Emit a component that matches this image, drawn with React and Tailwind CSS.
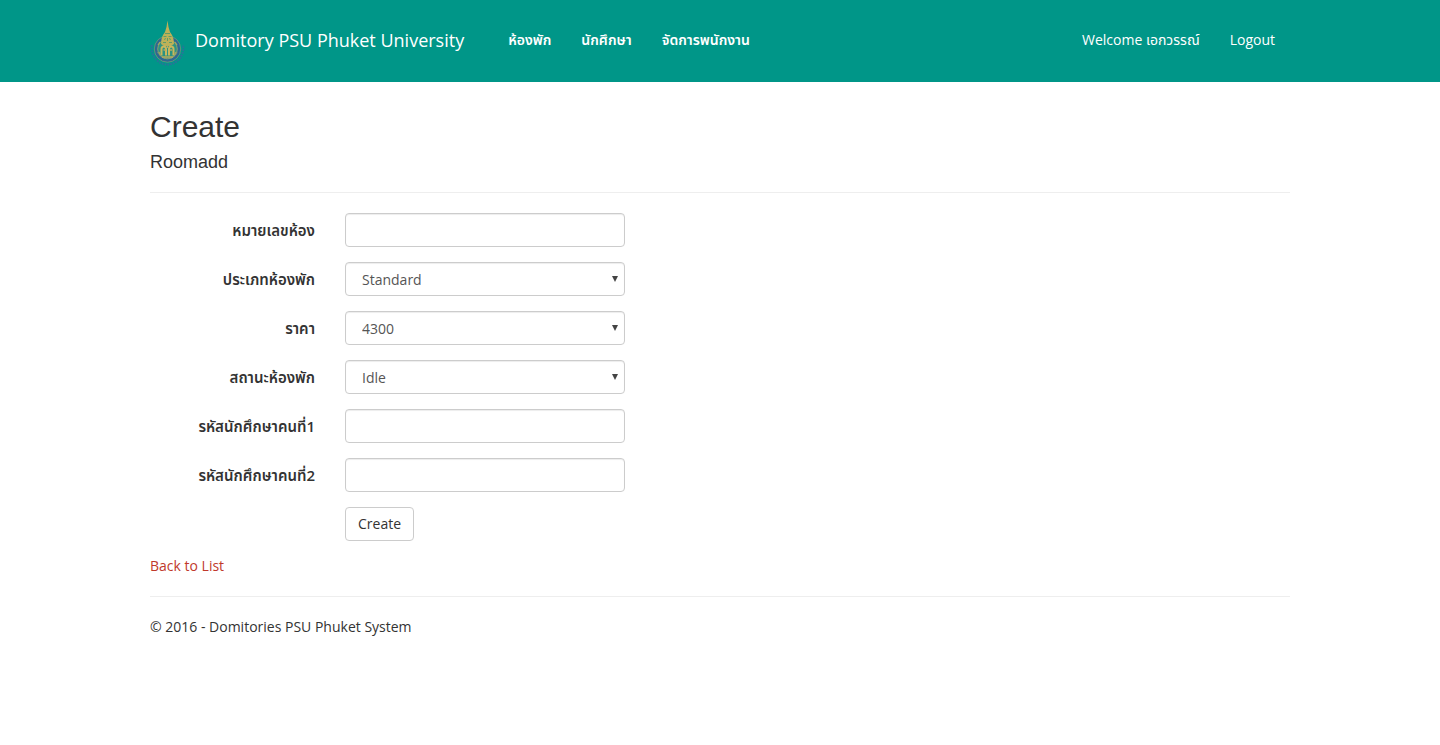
const inputClass =
  "h-[34px] w-full rounded border border-[#cccccc] bg-white px-3 text-sm text-[#555555] shadow-[inset_0_1px_1px_rgba(0,0,0,0.075)] focus:border-[#66afe9] focus:outline-none";

function Emblem() {
  return (
    <svg viewBox="0 0 36 50" className="h-[50px] w-9 shrink-0" aria-hidden="true">
      <path d="M1.8 27 C0.5 39 9 46.5 17.5 46.5 C26 46.5 34.5 39 33.2 27" fill="none" stroke="#2b719b" strokeWidth="2" strokeDasharray="1.7 1.1" />
      <circle cx="17.5" cy="31" r="11.6" fill="#2d9282" stroke="#2e6792" strokeWidth="3" />
      <circle cx="17.5" cy="31" r="13.2" fill="none" stroke="#7d9d72" strokeWidth="0.7" />
      <circle cx="17.5" cy="31" r="9.8" fill="none" stroke="#9fa566" strokeWidth="0.8" />
      <path d="M7.5 34 A10.8 10.8 0 0 0 27.5 34" fill="none" stroke="#8b9b78" strokeWidth="0.8" strokeDasharray="1 0.8" />
      <path d="M17.5 2.5 L18.5 9 L20 14 L22 17 L23.5 21 L24 26 L21 28 H14 L11 26 L11.5 21 L13 17 L15 14 L16.5 9 Z" fill="#bdb158" />
      <path d="M15 15.5 H20 M13.5 18.5 H16.5 M18.5 18.5 H21.5 M14 21.5 L16 20.5 M19 20.5 L21 21.5 M13 24.5 H16 M19 24.5 H22 M17.5 20 V23" stroke="#609c68" strokeWidth="1" />
      <path d="M11.5 37.5 V31 C11.5 27.5 16 27.5 16 31 V37.5 M19 37.5 V31 C19 27.5 23.5 27.5 23.5 31 V37.5" fill="none" stroke="#c8b75d" strokeWidth="2" />
      <path d="M13.5 32 H16 M19.5 32 H22 M12 39 H23 M17.5 27 V30" stroke="#b9ac5d" strokeWidth="1.4" />
      <path d="M8 27 L10 24 M27 27 L25 24 M9 34 L10.5 37 M26 34 L24.5 37" stroke="#a9a561" strokeWidth="1.2" />
    </svg>
  );
}

function Field({ id, label, children }) {
  return (
    <div className="mb-[15px] flex gap-[30px]">
      <label htmlFor={id} className="w-[165px] shrink-0 pt-[7px] text-right text-[15px] leading-5 font-semibold">
        {label}
      </label>
      <div className="w-full max-w-[280px]">{children}</div>
    </div>
  );
}

function TextField({ id, label }) {
  return (
    <Field id={id} label={label}>
      <input id={id} name={id} type="text" className={inputClass} />
    </Field>
  );
}

function SelectField({ id, label, options }) {
  return (
    <Field id={id} label={label}>
      <div className="relative">
        <select id={id} name={id} className={`${inputClass} appearance-none pt-0.5 pl-4`}>
          {options.map((option) => (
            <option key={option}>{option}</option>
          ))}
        </select>
        <svg viewBox="0 0 6 6" className="pointer-events-none absolute top-[14px] right-[7px] size-1.5" aria-hidden="true">
          <path d="M0 0 H6 L3 6 Z" fill="#444444" />
        </svg>
      </div>
    </Field>
  );
}

export default function App() {
  return (
    <div className="font-['Open_Sans','Noto_Sans_Thai','Noto_Sans',sans-serif] text-sm leading-5 text-[#333333]">
      <header className="bg-[#009688] text-white">
        <nav className="mx-auto flex max-w-[1170px] items-start px-[15px] pt-[18px] pb-[14px]">
          <a href="#home" className="flex gap-[9px] text-lg leading-[45px]">
            <Emblem />
            Domitory PSU Phuket University
          </a>
          <div className="ml-[44px] flex gap-[30px] leading-[43px] font-semibold">
            <a href="#rooms">ห้องพัก</a>
            <a href="#students">นักศึกษา</a>
            <a href="#staff">จัดการพนักงาน</a>
          </div>
          <div className="mr-[15px] ml-auto flex gap-[30px] leading-[43px]">
            <a href="#profile">Welcome เอกวรรณ์</a>
            <a href="#logout">Logout</a>
          </div>
        </nav>
      </header>

      <main className="mx-auto max-w-[1170px] px-[15px]">
        <h2 className="mt-7 font-['Liberation_Sans',sans-serif] text-[30px] leading-[33px] text-[#333333]">Create</h2>
        <h4 className="mt-[9px] font-['Liberation_Sans',sans-serif] text-lg leading-5">Roomadd</h4>
        <hr className="my-5 border-[#eeeeee]" />
        <form>
          <TextField id="roomNumber" label="หมายเลขห้อง" />
          <SelectField id="roomType" label="ประเภทห้องพัก" options={["Standard"]} />
          <SelectField id="price" label="ราคา" options={["4300"]} />
          <SelectField id="status" label="สถานะห้องพัก" options={["Idle"]} />
          <TextField id="student1" label="รหัสนักศึกษาคนที่1" />
          <TextField id="student2" label="รหัสนักศึกษาคนที่2" />
          <button type="button" className="mb-[15px] ml-[195px] block h-[34px] rounded border border-[#cccccc] bg-white px-3">
            Create
          </button>
        </form>
        <a href="#list" className="text-[#c0392b]">
          Back to List
        </a>
        <hr className="my-5 border-[#eeeeee]" />
        <footer>
          <p>© 2016 - Domitories PSU Phuket System</p>
        </footer>
      </main>
    </div>
  );
}
